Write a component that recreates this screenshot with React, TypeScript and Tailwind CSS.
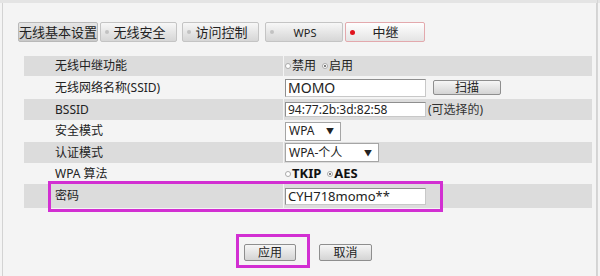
import React from 'react';

const font = { fontFamily: '"Noto Sans", "Noto Sans CJK SC", sans-serif' };

type TabProps = { label: string; dot?: 'gray' | 'red'; active?: boolean; className?: string };

function Tab({ label, dot, active, className = '' }: TabProps) {
  return (
    <div
      className={`flex h-[20px] items-center rounded-[2px] border text-[13px] leading-none text-[#222] ${
        active
          ? 'border-[#e3a9ad] bg-gradient-to-b from-[#ffffff] to-[#e4e4e4]'
          : label === '无线基本设置'
            ? 'border-[#b9b9b9] bg-gradient-to-b from-[#e6e6e6] to-[#c9c9c9]'
            : 'border-[#c4c4c4] bg-gradient-to-b from-[#f7f7f7] to-[#d6d6d6]'
      } ${className}`}
    >
      {dot && (
        <span
          className={`ml-[4px] shrink-0 rounded-full ${
            dot === 'red' ? 'h-[5px] w-[5px] bg-[#e0141e]' : 'h-[4px] w-[4px] bg-[#c2c2c2]'
          }`}
        />
      )}
      <span className="flex-1 text-center">{label}</span>
    </div>
  );
}

function Radio({ checked, label, bold }: { checked?: boolean; label: string; bold?: boolean }) {
  return (
    <span className="mr-[6px] inline-flex items-center">
      <span className="mr-[1px] flex h-[6px] w-[6px] items-center justify-center rounded-full border border-[#aaa] bg-white">
        {checked && <span className="h-[2px] w-[2px] rounded-full bg-[#555]" />}
      </span>
      <span className={bold ? 'font-bold text-[13px] text-[#111]' : 'text-[12px] text-[#222]'}>{label}</span>
    </span>
  );
}

function Row({
  label,
  children,
  gray,
  h,
}: {
  label: string;
  children: React.ReactNode;
  gray?: boolean;
  h: string;
}) {
  const bg = gray ? 'bg-[#dcdcdc]' : 'bg-[#f4f4f4]';
  return (
    <div className={`flex ${h}`}>
      <div className={`flex w-[259px] items-center pl-[31px] text-[12px] text-[#222] ${bg}`}>{label}</div>
      <div className="w-[1px] bg-[#f4f4f4]" />
      <div className={`flex flex-1 items-center pl-[1px] ${bg}`}>{children}</div>
    </div>
  );
}

function Input({ value, w = 'w-[141px]', h = 'h-[18px]', size = 'text-[13px]' }: { value: string; w?: string; h?: string; size?: string }) {
  return (
    <div
      className={`flex ${w} ${h} items-center border border-[#8f8f8f] border-b-[#c8c8c8] border-r-[#c8c8c8] bg-white pl-[2px] ${size} leading-none text-[#222]`}
    >
      {value}
    </div>
  );
}

function Select({ value, w }: { value: string; w: string }) {
  return (
    <div
      className={`flex ${w} h-[19px] items-center justify-between border border-[#a5a5a5] bg-white pl-[3px] pr-[6px] text-[12px] leading-none text-[#222]`}
    >
      <span>{value}</span>
      <span className="text-[8px] text-[#222]">▼</span>
    </div>
  );
}

function Btn({ label, w = 'w-[68px]', h = 'h-[15px]' }: { label: string; w?: string; h?: string }) {
  return (
    <div
      className={`flex ${w} ${h} items-center justify-center rounded-[2px] border border-[#8e8e8e] bg-gradient-to-b from-[#f6f6f6] to-[#d4d4d4] text-[12px] leading-none text-[#222]`}
    >
      {label}
    </div>
  );
}

export default function App() {
  return (
    <div className="relative h-[276px] w-[600px] overflow-hidden bg-[#f4f4f4]" style={font}>
      <div className="absolute left-0 right-0 top-0 h-[3px] bg-[#e4e4e4]" />
      <div className="ml-[2px] flex h-[276px] w-[595px] border-l border-r border-[#d3d3d3]">
        <div className="flex-1 pt-[22px]">
          {/* Tabs */}
          <div className="flex pl-[15px]">
            <Tab label="无线基本设置" className="w-[80px]" />
            <Tab label="无线安全" dot="gray" className="ml-[2px] w-[77px] pr-[6px]" />
            <Tab label="访问控制" dot="gray" className="ml-[5px] w-[77px] pr-[6px]" />
            <Tab label="WPS" dot="gray" className="ml-[6px] w-[78px] pr-[6px] !text-[11px]" />
            <Tab label="中继" dot="red" active className="ml-[2px] w-[80px] pr-[8px]" />
          </div>

          {/* Settings table */}
          <div className="ml-[21px] mt-[14px] flex w-[568px] flex-col">
            <Row label="无线中继功能" gray h="h-[20px]">
              <Radio label="禁用" />
              <Radio label="启用" checked />
            </Row>
            <Row label="无线网络名称(SSID)" h="h-[23px]">
              <Input value="MOMO" h="h-[18px]" size="text-[14px]" />
              <div className="ml-[7px]">
                <Btn label="扫描" />
              </div>
            </Row>
            <Row label="BSSID" gray h="h-[21px]">
              <Input value="94:77:2b:3d:82:58" h="h-[15px]" size="text-[12px]" />
              <span className="ml-[2px] text-[12px] text-[#333]">(可选择的)</span>
            </Row>
            <Row label="安全模式" h="h-[22px]">
              <Select value="WPA" w="w-[56px]" />
            </Row>
            <Row label="认证模式" gray h="h-[21px]">
              <Select value="WPA-个人" w="w-[94px]" />
            </Row>
            <Row label="WPA 算法" h="h-[21px]">
              <Radio label="TKIP" bold />
              <Radio label="AES" checked bold />
            </Row>
            <Row label="密码" gray h="h-[24px]">
              <Input value="CYH718momo**" h="h-[17px]" size="text-[13px]" />
            </Row>
          </div>

          {/* Action buttons */}
          <div className="mt-[36px] flex pl-[241px]">
            <Btn label="应用" w="w-[52px]" h="h-[17px]" />
            <div className="ml-[23px]">
              <Btn label="取消" w="w-[53px]" h="h-[17px]" />
            </div>
          </div>
        </div>
      </div>
      <div className="absolute right-[2px] top-0 h-[276px] w-[1px] bg-[#d6d6d6]" />

      {/* Magenta highlight annotations */}
      <div className="pointer-events-none absolute left-[48px] top-[181px] h-[31px] w-[395px] border-[3px] border-[#d22fd2]" />
      <div className="pointer-events-none absolute left-[236px] top-[234px] h-[34px] w-[74px] border-[3px] border-[#d22fd2]" />
    </div>
  );
}
